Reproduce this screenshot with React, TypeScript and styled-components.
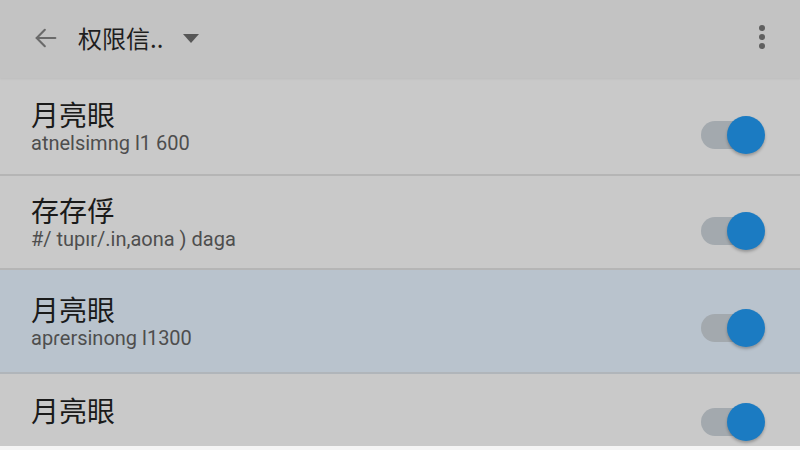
import React from "react";
import styled, { createGlobalStyle } from "styled-components";

const Global = createGlobalStyle`
  html, body { margin: 0; padding: 0; background: #f4f4f4; }
  body { font-family: Roboto, "Noto Sans CJK SC", sans-serif; }
`;

const Screen = styled.div`
  width: 800px;
  height: 446px;
  display: flex;
  flex-direction: column;
  background: #c8c8c8;
  overflow: hidden;
`;

const Toolbar = styled.header`
  height: 78px;
  flex: none;
  display: flex;
  align-items: center;
  padding: 0 35px 0 32px;
  background: #c3c3c3;
  box-shadow: 0 1px 2px rgba(0, 0, 0, 0.06);
  position: relative;
  z-index: 1;
`;

const BackButton = styled.div`
  width: 28px;
  height: 28px;
  display: flex;
  align-items: center;
  justify-content: center;
  margin-right: 18px;
  margin-top: -2px;
`;

const Title = styled.span`
  font-family: "Noto Sans CJK SC", sans-serif;
  font-size: 24px;
  color: #1e1e1e;
  margin-top: -4px;
`;

const Caret = styled.div`
  width: 0;
  height: 0;
  border-left: 8px solid transparent;
  border-right: 8px solid transparent;
  border-top: 9px solid #575757;
  margin-left: 20px;
  margin-top: -2px;
`;

const Spacer = styled.div`
  flex: 1;
`;

const MenuDots = styled.div`
  display: flex;
  flex-direction: column;
  gap: 3px;
  margin-top: -4px;
  span {
    width: 6px;
    height: 6px;
    border-radius: 50%;
    background: #5f5f5f;
  }
`;

const Row = styled.div<{ $h: number; $active?: boolean }>`
  height: ${(p) => p.$h}px;
  flex: none;
  display: flex;
  align-items: center;
  padding: 0 35px 0 31px;
  background: ${(p) => (p.$active ? "#b9c3cd" : "#c9c9c9")};
  border-bottom: 2px solid ${(p) => (p.$active ? "#b0b5ba" : "#b5b5b5")};
  box-sizing: border-box;
`;

const LastRow = styled(Row)`
  flex: 1;
  border-bottom: none;
`;

const Texts = styled.div`
  flex: 1;
  display: flex;
  flex-direction: column;
`;

const RowTitle = styled.div`
  font-family: "Noto Sans CJK SC", sans-serif;
  font-size: 28px;
  line-height: 32px;
  color: #1a1a1a;
`;

const RowSub = styled.div`
  font-family: Roboto, sans-serif;
  font-size: 20px;
  line-height: 24px;
  color: #4e4e4e;
  margin-top: 1px;
`;

const Switch = styled.div<{ $drop: number }>`
  position: relative;
  width: 64px;
  height: 28px;
  flex: none;
  margin-top: ${(p) => p.$drop}px;
`;

const Track = styled.div`
  position: absolute;
  left: 0;
  top: 0;
  width: 50px;
  height: 28px;
  border-radius: 14px;
  background: #a3a9ae;
`;

const Thumb = styled.div`
  position: absolute;
  right: 0;
  top: -5px;
  width: 38px;
  height: 38px;
  border-radius: 50%;
  background: #1b7bc2;
  box-shadow: 0 2px 3px rgba(0, 0, 0, 0.25);
`;

const Toggle = ({ drop }: { drop: number }) => (
  <Switch $drop={drop}>
    <Track />
    <Thumb />
  </Switch>
);

const rows = [
  { h: 98, title: "月亮眼", sub: "atnelsimng l1 600", drop: 18, active: false },
  { h: 94, title: "存存俘", sub: "#/ tupır/.in,aona ) daga", drop: 18, active: false },
  { h: 104, title: "月亮眼", sub: "apɾersinong l1300", drop: 14, active: true },
];

export default function App() {
  return (
    <>
      <Global />
      <Screen>
        <Toolbar>
          <BackButton>
            <svg width="28" height="28" viewBox="0 0 24 24" fill="none" stroke="#6a6a6a" strokeWidth="1.8" strokeLinecap="round" strokeLinejoin="round">
              <path d="M20 12H4" />
              <path d="M11 5l-7 7 7 7" />
            </svg>
          </BackButton>
          <Title>权限信..</Title>
          <Caret />
          <Spacer />
          <MenuDots>
            <span />
            <span />
            <span />
          </MenuDots>
        </Toolbar>
        {rows.map((r, i) => (
          <Row key={i} $h={r.h} $active={r.active}>
            <Texts>
              <RowTitle>{r.title}</RowTitle>
              <RowSub>{r.sub}</RowSub>
            </Texts>
            <Toggle drop={r.drop} />
          </Row>
        ))}
        <LastRow $h={0}>
          <Texts>
            <RowTitle>月亮眼</RowTitle>
          </Texts>
          <Toggle drop={24} />
        </LastRow>
      </Screen>
    </>
  );
}
